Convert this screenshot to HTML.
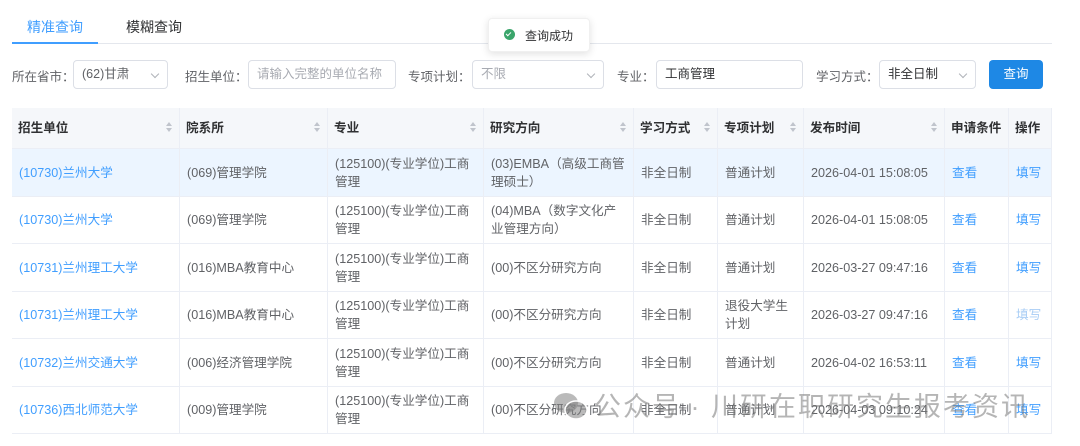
<!DOCTYPE html>
<html><head><meta charset="utf-8">
<style>
*{margin:0;padding:0;box-sizing:border-box}
body{width:1080px;height:446px;background:#fff;font-family:"Liberation Sans","Noto Sans CJK SC",sans-serif;color:#606266;position:relative;overflow:hidden;font-size:12px}
.a{position:absolute}
.tab{font-size:14px;top:17px}
.lbl{font-size:12.5px;color:#606266;top:66px}
.inp{border:1px solid #dcdfe6;border-radius:4px;height:29px;top:60px;font-size:12.5px;line-height:27px;padding-left:8px;color:#606266}
.arr{position:absolute;right:9px;top:10px;width:6px;height:6px;border-right:1px solid #b0b3b9;border-bottom:1px solid #b0b3b9;transform:rotate(45deg)}
.cell{position:absolute;display:flex;align-items:center;padding-left:7px;padding-right:5px;border-right:1px solid #ebeef5;border-bottom:1px solid #ebeef5;line-height:18px;font-size:12.6px;color:#606266}
.h{font-weight:bold;color:#303133;background:#f5f7fa;white-space:nowrap;padding-left:6px}
.lk{color:#409eff}
.sort{position:absolute;right:10px;top:17px;width:0;height:0}
.sort:before{content:"";position:absolute;left:-3px;top:-3px;border:3px solid transparent;border-bottom:4px solid #c0c4cc;border-top:0}
.sort:after{content:"";position:absolute;left:-3px;top:3px;border:3px solid transparent;border-top:4px solid #c0c4cc;border-bottom:0}
</style></head><body>
<div class="a tab" style="left:27px;color:#409eff">精准查询</div>
<div class="a tab" style="left:126px;color:#303133">模糊查询</div>
<div class="a" style="left:12px;top:43px;width:1040px;height:1px;background:#e4e7ed"></div>
<div class="a" style="left:12px;top:42px;width:86px;height:2px;background:#409eff"></div>

<div class="a" style="left:488px;top:18px;width:102px;height:34px;background:#fff;border-radius:4px;box-shadow:0 2px 8px rgba(0,0,0,.12);border:1px solid #f0f0f0"></div>
<div class="a" style="left:504px;top:29px;width:11px;height:11px;border-radius:50%;background:#3aa56b"></div>
<div class="a" style="left:507px;top:31px;width:3px;height:5px;border-right:1.5px solid #fff;border-bottom:1.5px solid #fff;transform:rotate(45deg)"></div>
<div class="a" style="left:525px;top:27px;font-size:12px;color:#303133">查询成功</div>

<div class="a lbl" style="left:12px">所在省市：</div>
<div class="a inp" style="left:73px;width:95px">(62)甘肃<span class="arr"></span></div>
<div class="a lbl" style="left:185px">招生单位：</div>
<div class="a inp" style="left:248px;width:148px;color:#a8abb2">请输入完整的单位名称</div>
<div class="a lbl" style="left:408px">专项计划：</div>
<div class="a inp" style="left:472px;width:132px;color:#a8abb2">不限<span class="arr"></span></div>
<div class="a lbl" style="left:617px">专业：</div>
<div class="a inp" style="left:656px;width:147px;color:#303133">工商管理</div>
<div class="a lbl" style="left:816px">学习方式：</div>
<div class="a inp" style="left:879px;width:97px;color:#303133">非全日制<span class="arr"></span></div>
<div class="a" style="left:989px;top:60px;width:54px;height:29px;background:#1e88e5;border-radius:4px;color:#fff;font-size:12.5px;text-align:center;line-height:29px">查询</div>

<div id="t"></div>
<script>
var xs=[12,180,328,484,634,718,804,945,1009,1052];
var ys=[108,149,197,244,292,339,387,434];
var hdr=["招生单位","院系所","专业","研究方向","学习方式","专项计划","发布时间","申请条件","操作"];
var srt=[1,1,1,1,1,1,1,0,0];
var rows=[
["(10730)兰州大学","(069)管理学院","(125100)(专业学位)工商<br>管理","(03)EMBA（高级工商管<br>理硕士）","非全日制","普通计划","2026-04-01 15:08:05","查看","填写"],
["(10730)兰州大学","(069)管理学院","(125100)(专业学位)工商<br>管理","(04)MBA（数字文化产<br>业管理方向）","非全日制","普通计划","2026-04-01 15:08:05","查看","填写"],
["(10731)兰州理工大学","(016)MBA教育中心","(125100)(专业学位)工商<br>管理","(00)不区分研究方向","非全日制","普通计划","2026-03-27 09:47:16","查看","填写"],
["(10731)兰州理工大学","(016)MBA教育中心","(125100)(专业学位)工商<br>管理","(00)不区分研究方向","非全日制","退役大学生<br>计划","2026-03-27 09:47:16","查看","填写g"],
["(10732)兰州交通大学","(006)经济管理学院","(125100)(专业学位)工商<br>管理","(00)不区分研究方向","非全日制","普通计划","2026-04-02 16:53:11","查看","填写"],
["(10736)西北师范大学","(009)管理学院","(125100)(专业学位)工商<br>管理","(00)不区分研究方向","非全日制","普通计划","2026-04-03 09:10:24","查看","填写"]];
var h="";
for(var c=0;c<9;c++){h+='<div class="cell h" style="left:'+xs[c]+'px;top:108px;width:'+(xs[c+1]-xs[c])+'px;height:41px">'+hdr[c]+(srt[c]?'<span class="sort"></span>':'')+'</div>';}
for(var r=0;r<6;r++){for(var c=0;c<9;c++){var v=rows[r][c],cls="cell",st="";
if(c==0||c==7||c==8)cls+=" lk";
if(v=="填写g"){v="填写";st="color:#a8cdf5;";}
if(r==0)st+="background:#ecf5ff;";
h+='<div class="'+cls+'" style="'+st+'left:'+xs[c]+'px;top:'+ys[r+1]+'px;width:'+(xs[c+1]-xs[c])+'px;height:'+(ys[r+2]-ys[r+1])+'px"><span>'+v+'</span></div>';}}
document.getElementById("t").innerHTML=h;
</script>
<svg class="a" style="left:552px;top:390px" width="38" height="32" viewBox="0 0 38 32"><ellipse cx="14" cy="13" rx="12" ry="10" fill="rgba(130,130,130,.55)"/><ellipse cx="24" cy="20" rx="11" ry="9" fill="rgba(130,130,130,.55)" stroke="#fff" stroke-width="1.5"/></svg>
<div class="a" style="left:594px;top:385px;font-size:27px;color:rgba(120,120,120,.55);letter-spacing:2px;white-space:nowrap">公众号 · 川研在职研究生报考资讯</div>
</body></html>
